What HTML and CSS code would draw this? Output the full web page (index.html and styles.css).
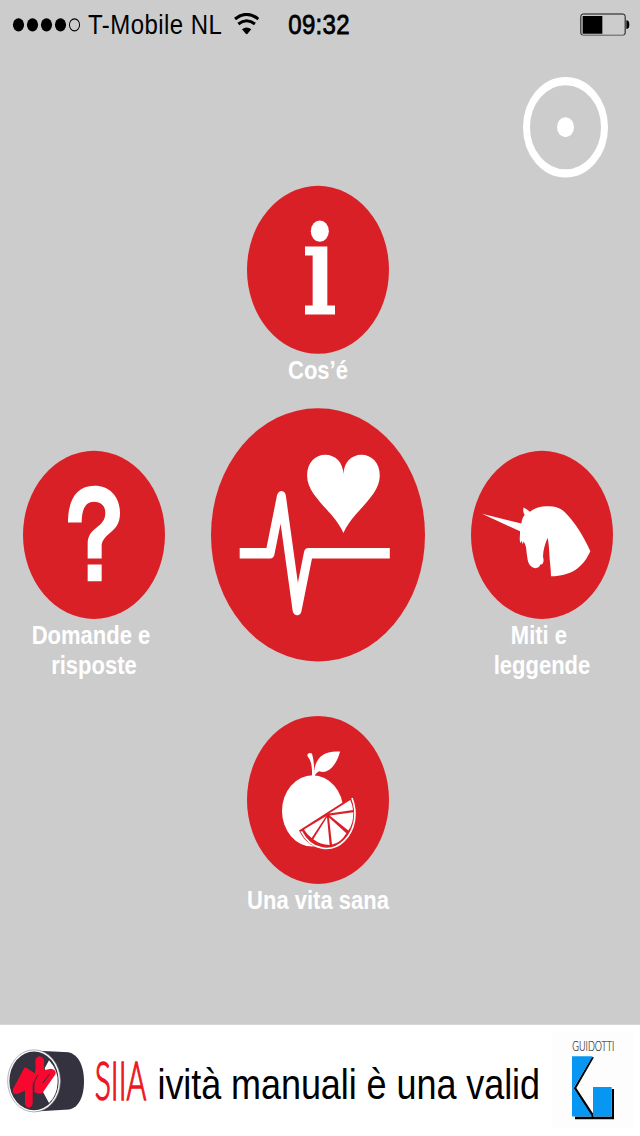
FILE: index.html
```html
<!DOCTYPE html>
<html lang="it">
<head>
<meta charset="utf-8">
<title>SIIA</title>
<link rel="stylesheet" href="styles.css">
</head>
<body>
<div class="screen">
  <header class="status">
    <svg class="signal" viewBox="0 0 68 12">
      <circle cx="5.5" cy="6" r="5.6"/><circle cx="19.5" cy="6" r="5.6"/><circle cx="33.5" cy="6" r="5.6"/><circle cx="47.5" cy="6" r="5.6"/>
      <circle class="signal-empty" cx="61.5" cy="6" r="5.1"/>
    </svg>
    <span class="carrier">T-Mobile NL</span>
    <svg class="wifi" viewBox="702 38 76 66" preserveAspectRatio="none">
      <path d="M705 56Q740 28 775 56M715 71Q740 51 765 71"/>
      <path class="solid" d="M726 87Q740 76 754 87L740 103Z"/>
    </svg>
    <span class="time">09:32</span>
    <svg class="battery" viewBox="239 37 150 70" preserveAspectRatio="none">
      <rect class="case" x="241.500" y="40" width="133" height="64" rx="7"/>
      <path d="M247 46H306V99H247ZM378 59Q387 59 387 72Q387 85 378 85Z"/>
    </svg>
  </header>

  <div class="toolbar"><div class="ring"><div class="ring-dot"></div></div></div>

  <main class="menu">
    <div class="item">
      <svg class="disc" viewBox="21 17 426 504" preserveAspectRatio="none">
        <ellipse cx="239.500" cy="153" rx="27" ry="32"/>
        <path d="M195 199H262V376H285V403H195V376H218V226H195Z"/>
      </svg>
      <div class="label">Cos’é</div>
    </div>

    <div class="row">
      <div class="item side">
        <svg class="disc" viewBox="39 32 426 504" preserveAspectRatio="none">
          <path d="M174 247C174 176 202 137 253 137C302 137 330 173 330 219C330 281 275 276 275 320V355H233V312C233 258 286 266 286 218C286 196 271 185 252 185C227 185 215 207 215 247ZM233 373H275V423H233Z"/>
        </svg>
        <div class="label">Domande e&nbsp;<br>risposte</div>
      </div>
      <svg class="disc large" viewBox="34 26 640 756" preserveAspectRatio="none">
        <path d="M431 399C402 333 322 290 322 227C322 189 347 165 376 165C407 165 430 188 431 223C432 188 455 165 485 165C515 165 540 189 540 227C540 290 460 333 431 399Z"/>
        <path class="pulse" transform="scale(1 1.1833)" d="M120 388.700H211L245 245L292 532L326 388.700H570"/>
      </svg>
      <div class="item side">
        <svg class="disc" viewBox="33 32 426 504" preserveAspectRatio="none">
          <path d="M66 221L184 250C186 236 190 229 194 224C189 216 189 209 191 202C199 206 206 211 210 215C224 202 243 197 264 198C290 197 307 206 321 223C347 251 370 286 391 333C370 380 334 408 273 408C273 385 269 366 268 341C267 322 266 309 263 293C256 309 249 330 249 350C253 361 250 375 241 373C238 384 225 387 215 380C202 370 203 354 200 339C199 325 198 315 191 304L188 312L185 302L181 309C177 297 181 285 180 273Z"/>
        </svg>
        <div class="label">Miti e&nbsp;<br>leggende</div>
      </div>
    </div>

    <div class="item">
      <svg class="disc" viewBox="21 17 426 504" preserveAspectRatio="none">
        <ellipse cx="218" cy="302" rx="92" ry="107"/>
        <path d="M216 198C217 172 214 151 204 140C198 132 207 124 216 130C222 151 223 172 223 192C222 151 244 119 300 124C291 162 265 193 238 183Q229 186 223 199Z"/>
        <path class="wedge" d="M177 361L341 256C362 306 353 360 319 395C273 434 205 421 177 361Z"/>
        <path class="rind" d="M184 363C213 420 274 430 313 391C346 357 353 309 336 263"/>
        <path d="M192 358L258 318L215 383Q201 374 192 358ZM220 387L261 321L269 404Q241 404 220 387ZM267 322L319 369Q302 398 276 403ZM269 316L340 306Q341 338 325 361ZM267 310L331 269Q338 285 339 299Z"/>
      </svg>
      <div class="label">Una vita sana</div>
    </div>
  </main>

  <footer class="banner">
    <svg class="siia" viewBox="0 15 472.500 333" preserveAspectRatio="none">
      <path class="drum" d="M100 92L205 97C238 104 252 143 252 184C252 225 239 262 207 269L105 275Z"/>
      <ellipse class="drum-rim" cx="102" cy="183" rx="79" ry="93"/>
      <ellipse class="drum-face" cx="102" cy="183" rx="74" ry="88"/>
      <path class="glint" d="M147 121Q175 152 173 187Q171 228 147 249L129 216L148 185L134 145Z"/>
      <path class="arrow-red" d="M106 119Q118 100 132 119L132 151L152 147Q172 151 166 164L127 219Q117 225 103 216L104 188L98 194L98 252Q87 274 75 254L75 212L52 222Q34 224 39 207L72 146Q77 140 83 147L104 160L107 145Z"/>
      <path class="cut" d="M99 193L114 165M128 190L148 163"/>
      <text class="siia-name" transform="translate(284 241) scale(1 1.500)" textLength="155" lengthAdjust="spacingAndGlyphs">SIIA</text>
    </svg>
    <div class="ticker">ività manuali è una valid</div>
    <svg class="guidotti" viewBox="0 15 300 333" preserveAspectRatio="none">
      <rect class="paper" x="36" y="37" width="242" height="287"/>
      <text class="guidotti-name" transform="translate(97 94) scale(1 1.400)" textLength="126" lengthAdjust="spacingAndGlyphs">GUIDOTTI</text>
      <path class="shadow" d="M105 290H215V207H222V298H105ZM155 112H162L109 204L161 284V291H155L101 205Z"/>
      <path class="blue" d="M96 109H158L101 204L157 290H96ZM159 201H215V290H159Z"/>
    </svg>
  </footer>
</div>
</body>
</html>
```

FILE: styles.css
```css
* { box-sizing: border-box; }

html, body {
  margin: 0;
  height: 1136px;
  overflow: hidden;
  background: #ccc;
}

/* 640x960 layout stretched to the taller display */
.screen {
  display: flex;
  flex-direction: column;
  width: 640px;
  height: 960px;
  transform: scaleY(1.18333);
  transform-origin: 0 0;
  font-family: "Liberation Sans", Arial, sans-serif;
  background: #ccc;
}

svg { display: block; flex: none; }

.status {
  display: flex;
  align-items: center;
  height: 40px;
  padding: 0 10px 0 13px;
  font-size: 24px;
  line-height: 40px;
  color: #000;
}
.signal { width: 68px; height: 12px; margin-top: 1px; overflow: visible; }
.signal-empty { fill: none; stroke: #000; stroke-width: 1; }
.carrier { width: 146px; margin-left: 7px; padding-top: 2px; letter-spacing: .45px; white-space: nowrap; }
.wifi { width: 25.300px; height: 18.600px; }
.wifi path { fill: none; stroke: #000; stroke-width: 9; }
.wifi .solid { fill: #000; stroke: none; }
.time { margin-left: 29px; padding-top: 2px; letter-spacing: .3px; -webkit-text-stroke: .7px #000; }
.battery { width: 50px; height: 19.700px; margin: 1px 0 0 auto; }
.battery .case { fill: none; stroke: #111; stroke-width: 3; }

.toolbar { display: flex; justify-content: flex-end; padding: 25px 32px 0 0; }
.ring {
  display: flex;
  align-items: center;
  justify-content: center;
  width: 85px;
  height: 85px;
  border: 7px solid #fff;
  border-radius: 50%;
}
.ring-dot { width: 17px; height: 17px; border-radius: 50%; background: #fff; }

.menu {
  display: flex;
  flex-direction: column;
  align-items: center;
  flex: 1;
  padding: 6.800px 4px 0 0;
}
.item { display: flex; flex-direction: column; align-items: center; width: 142px; }
.disc { width: 142px; height: 142px; border-radius: 50%; background: #da2027; fill: #fff; }
.disc.large { width: 213.500px; height: 213.500px; }
.label {
  margin-top: 1px;
  color: #fff;
  font-size: 22px;
  font-weight: bold;
  line-height: 25.700px;
  text-align: center;
  white-space: nowrap;
}
.row {
  display: flex;
  justify-content: space-between;
  align-items: flex-start;
  width: 590px;
  height: 230.200px;
  margin: 19.500px 0 29.500px;
}
.side { margin-top: 35.700px; }
.side .label { line-height: 26.500px; }
.pulse { fill: none; stroke: #fff; stroke-width: 27; stroke-linejoin: round; }
.wedge { fill: #da2027; }
.rind { fill: none; stroke: #fff; stroke-width: 5; }

.banner { display: flex; height: 94px; background: #fff; }
.siia { width: 157.500px; height: 94px; }
.drum { fill: #35323f; }
.drum-rim { fill: #fff; stroke: #8d8b94; stroke-width: 2; }
.drum-face { fill: #35323f; }
.glint { fill: #fff; }
.arrow-red { fill: #f8082f; }
.cut { fill: none; stroke: #35323f; stroke-width: 3; }
.siia-name { font: 300 105px Lato, sans-serif; fill: #ee1520; stroke: #ee1520; stroke-width: 3; }
.ticker {
  width: 382.500px;
  padding-top: 30px;
  font-size: 36px;
  line-height: 41px;
  letter-spacing: -.07px;
  color: #000;
  white-space: nowrap;
}
.guidotti { width: 100px; height: 94px; }
.paper { fill: #fdfdfd; }
.guidotti-name { font: 300 30px Lato, sans-serif; fill: #333; stroke: #333; stroke-width: .5; }
.shadow { fill: #000; }
.blue { fill: #0797f2; }
```
